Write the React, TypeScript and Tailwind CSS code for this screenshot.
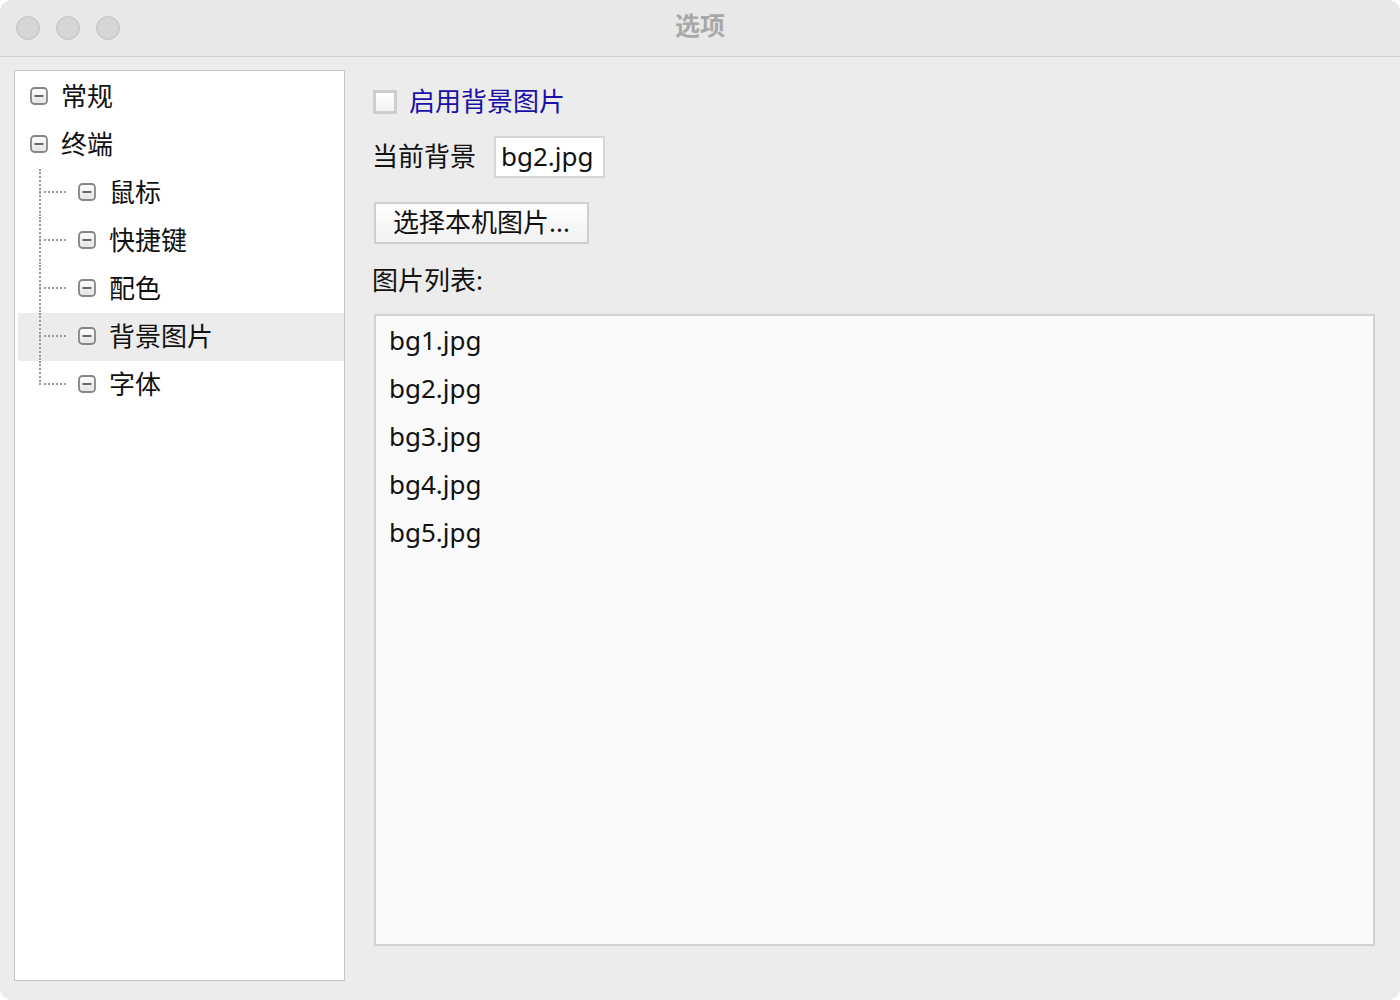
import React from "react";

const font = {
  fontFamily: '"Noto Sans", "Noto Sans CJK SC", sans-serif',
};

type TreeItem = { label: string; child?: boolean; last?: boolean; selected?: boolean };

const treeItems: TreeItem[] = [
  { label: "常规" },
  { label: "终端" },
  { label: "鼠标", child: true },
  { label: "快捷键", child: true },
  { label: "配色", child: true },
  { label: "背景图片", child: true, selected: true },
  { label: "字体", child: true, last: true },
];

const images = ["bg1.jpg", "bg2.jpg", "bg3.jpg", "bg4.jpg", "bg5.jpg"];

const ExpandIcon = () => (
  <svg width="18" height="18" viewBox="0 0 18 18" className="shrink-0">
    <defs>
      <linearGradient id="eg" x1="0" y1="0" x2="0" y2="1">
        <stop offset="0" stopColor="#ffffff" />
        <stop offset="1" stopColor="#e2e2e2" />
      </linearGradient>
    </defs>
    <rect x="1" y="1" width="16" height="16" rx="3.5" fill="url(#eg)" stroke="#858585" strokeWidth="1.8" />
    <rect x="4.5" y="8" width="9" height="2" fill="#686868" />
  </svg>
);

const TreeRow = ({ item }: { item: TreeItem }) => (
  <div className={`flex h-12 items-stretch ${item.selected ? "bg-[#ececec]" : ""}`}>
    {item.child && (
      <div className="ml-[21px] flex w-[27px] flex-col">
        <div className="-mb-px h-1/2 border-b-2 border-l-2 border-dotted border-[#9a9a9a]" />
        <div className={`h-1/2 ${item.last ? "" : "border-l-2 border-dotted border-[#9a9a9a]"}`} />
      </div>
    )}
    <div className="ml-[12px] flex items-center gap-[13px] pb-[2px]">
      <ExpandIcon />
      <span className="text-[26px] leading-none text-[#111]">{item.label}</span>
    </div>
  </div>
);

export default function App() {
  return (
    <div className="h-[1000px] w-[1400px] bg-white" style={font}>
      <div className="flex h-full w-full flex-col overflow-hidden rounded-[12px] bg-[#ececec]">
        {/* title bar */}
        <div className="relative flex h-[57px] shrink-0 items-center border-b border-[#cfcfcf] bg-[#e8e8e8]">
          <div className="flex gap-4 pl-4">
            <div className="h-6 w-6 rounded-full border border-[#c2c2c2] bg-[#d5d5d5]" />
            <div className="h-6 w-6 rounded-full border border-[#c2c2c2] bg-[#d5d5d5]" />
            <div className="h-6 w-6 rounded-full border border-[#c2c2c2] bg-[#d5d5d5]" />
          </div>
          <div className="pointer-events-none absolute inset-0 flex items-center justify-center pb-[4px]">
            <span className="text-[25px] font-bold text-[#a8a8a8]">选项</span>
          </div>
        </div>

        {/* body */}
        <div className="flex min-h-0 flex-1">
          {/* tree */}
          <div className="mb-[19px] ml-[14px] mt-[13px] w-[331px] border border-[#c6c6c6] bg-white pl-[3px] pt-[2px]">
            {treeItems.map((item) => (
              <TreeRow key={item.label} item={item} />
            ))}
          </div>

          {/* right side */}
          <div className="ml-[27px] mr-[25px] flex flex-1 flex-col pb-[54px] pt-[30px]">
            <div className="flex h-[30px] items-center">
              <div className="ml-[1px] h-6 w-6 shrink-0 border-[3px] border-[#cdcdcd] bg-gradient-to-b from-white to-[#f2f2f2]" />
              <span className="mb-[2px] ml-[12px] text-[26px] leading-none text-[#1a10a8]">启用背景图片</span>
            </div>

            <div className="mt-[19px] flex h-[42px] items-center">
              <span className="mb-[2px] text-[26px] leading-none text-[#111]">当前背景</span>
              <div className="ml-[18px] flex h-[42px] w-[111px] items-center border-2 border-[#d6d6d6] bg-white pb-[2px] pl-[5px]">
                <span className="text-[26px] leading-none text-[#111]">bg2.jpg</span>
              </div>
            </div>

            <div className="mt-[24px] flex">
              <div className="ml-[2px] flex h-[42px] w-[215px] items-center border-2 border-[#cfcfcf] bg-gradient-to-b from-white to-[#f1f1f1] pb-[2px] pl-[17px]">
                <span className="text-[26px] leading-none text-[#111]">选择本机图片...</span>
              </div>
            </div>

            <div className="mt-[19px] flex h-[36px] items-center pb-[2px]">
              <span className="text-[26px] leading-none text-[#111]">图片列表:</span>
            </div>

            <div className="ml-[2px] mt-[15px] flex-1 border-2 border-[#d2d2d2] bg-[#fafafa] pl-[13px] pt-[1px]">
              {images.map((img) => (
                <div key={img} className="flex h-12 items-center pb-[2px]">
                  <span className="text-[26px] leading-none text-[#111]">{img}</span>
                </div>
              ))}
            </div>
          </div>
        </div>
      </div>
    </div>
  );
}
